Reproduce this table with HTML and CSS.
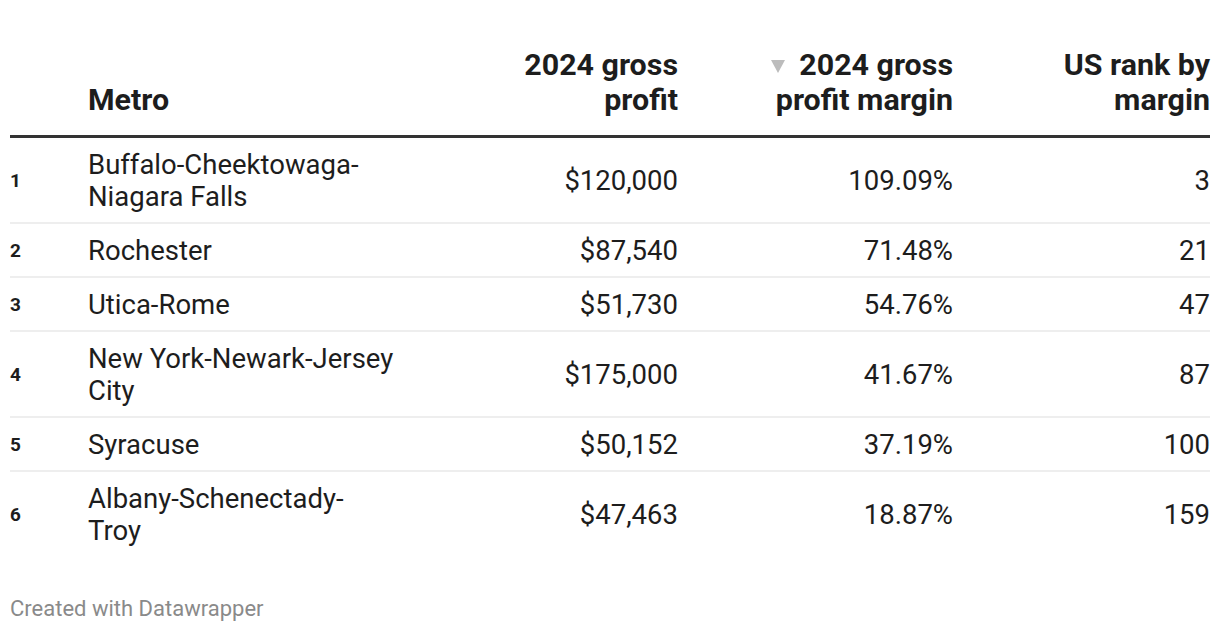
FILE: index.html
```html
<!DOCTYPE html>
<html lang="en">
<head>
<meta charset="utf-8">
<title>Metro gross profit</title>
<link rel="stylesheet" href="styles.css">
</head>
<body>
<div class="chart">
  <table class="tbl">
    <colgroup>
      <col class="c-rank">
      <col class="c-metro">
      <col class="c-profit">
      <col class="c-margin">
      <col class="c-us">
    </colgroup>
    <thead>
      <tr>
        <th class="rank"></th>
        <th class="metro">Metro</th>
        <th class="num">2024 gross<br>profit</th>
        <th class="num"><span class="sort"></span>2024 gross<br>profit margin</th>
        <th class="num">US rank by<br>margin</th>
      </tr>
    </thead>
    <tbody>
      <tr>
        <td class="rank">1</td>
        <td class="metro">Buffalo-Cheektowaga-<br>Niagara Falls</td>
        <td class="num">$120,000</td>
        <td class="num">109.09%</td>
        <td class="num">3</td>
      </tr>
      <tr>
        <td class="rank">2</td>
        <td class="metro">Rochester</td>
        <td class="num">$87,540</td>
        <td class="num">71.48%</td>
        <td class="num">21</td>
      </tr>
      <tr>
        <td class="rank">3</td>
        <td class="metro">Utica-Rome</td>
        <td class="num">$51,730</td>
        <td class="num">54.76%</td>
        <td class="num">47</td>
      </tr>
      <tr>
        <td class="rank">4</td>
        <td class="metro">New York-Newark-Jersey<br>City</td>
        <td class="num">$175,000</td>
        <td class="num">41.67%</td>
        <td class="num">87</td>
      </tr>
      <tr>
        <td class="rank">5</td>
        <td class="metro">Syracuse</td>
        <td class="num">$50,152</td>
        <td class="num">37.19%</td>
        <td class="num">100</td>
      </tr>
      <tr class="last">
        <td class="rank">6</td>
        <td class="metro">Albany-Schenectady-<br>Troy</td>
        <td class="num">$47,463</td>
        <td class="num">18.87%</td>
        <td class="num">159</td>
      </tr>
    </tbody>
  </table>
  <div class="footer">Created with Datawrapper</div>
</div>
</body>
</html>
```

FILE: styles.css
```css
html, body {
  margin: 0;
  padding: 0;
  background: #ffffff;
}
body {
  font-family: Roboto, "Liberation Sans", Arial, sans-serif;
  color: #1d1d1d;
}
.chart {
  padding: 47px 10px 0 10px;
}
.tbl {
  width: 1200px;
  border-collapse: collapse;
  table-layout: fixed;
}
.c-rank { width: 78px; }
.c-metro { width: 342px; }
.c-profit { width: 248px; }
.c-margin { width: 275px; }
.c-us { width: 257px; }

.tbl th {
  font-size: 30.4px;
  line-height: 35px;
  font-weight: 700;
  color: #1d1d1d;
  vertical-align: bottom;
  padding: 0 0 18px 0;
  border-bottom: 3px solid #333333;
  text-align: left;
}
.tbl th.num { text-align: right; }
.sort {
  display: inline-block;
  width: 0;
  height: 0;
  border-left: 7px solid transparent;
  border-right: 7px solid transparent;
  border-top: 13px solid #bcbcbc;
  margin: 0 14px 2px 0;
}
.tbl td {
  font-size: 27.5px;
  line-height: 32px;
  padding: 11px 0 9px 0;
  vertical-align: middle;
  border-bottom: 2px solid #eeeeee;
  font-variant-numeric: tabular-nums;
}
.tbl tr.last td { border-bottom: none; }
.tbl td.rank {
  font-size: 19px;
  font-weight: 700;
}
.tbl td.num { text-align: right; }
.footer {
  margin-top: 40px;
  font-size: 22px;
  line-height: 26px;
  color: #8a8a8a;
}
```
